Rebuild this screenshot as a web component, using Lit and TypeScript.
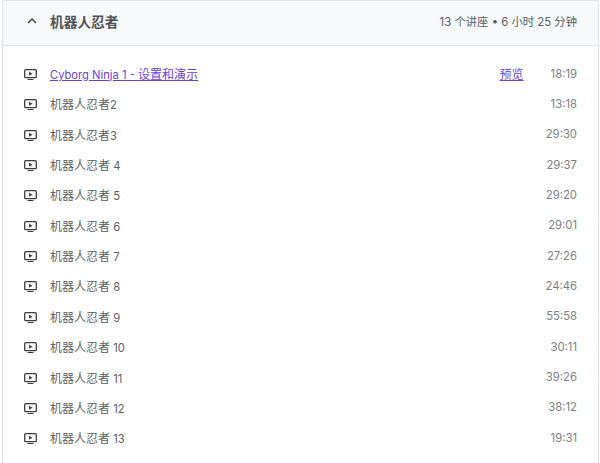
import { LitElement, html, css } from "lit";
import { customElement } from "lit/decorators.js";

const rows: [string, string, string][] = [
  ["机器人忍者", "2", "13:18"],
  ["机器人忍者", "3", "29:30"],
  ["机器人忍者", " 4", "29:37"],
  ["机器人忍者", " 5", "29:20"],
  ["机器人忍者", " 6", "29:01"],
  ["机器人忍者", " 7", "27:26"],
  ["机器人忍者", " 8", "24:46"],
  ["机器人忍者", " 9", "55:58"],
  ["机器人忍者", " 10", "30:11"],
  ["机器人忍者", " 11", "39:26"],
  ["机器人忍者", " 12", "38:12"],
  ["机器人忍者", " 13", "19:31"],
];

const icon = html`<svg class="icon" viewBox="0 0 13 11" width="13" height="11" aria-hidden="true">
  <rect x="0.7" y="0.7" width="11.6" height="8" rx="1" fill="none" stroke="#3a3c3e" stroke-width="1.3"></rect>
  <path d="M5 2.7v4L8.6 4.7z" fill="#3a3c3e"></path>
  <path d="M3.5 10.5h6" stroke="#3a3c3e" stroke-width="1"></path>
</svg>`;

@customElement("app-root")
export class AppRoot extends LitElement {
  static styles = css`
    :host {
      display: block;
      width: 600px;
      height: 463px;
      overflow: hidden;
      background: #fff;
      font-family: Inter, "Noto Sans CJK SC", sans-serif;
      color: #3e4143;
    }
    .panel {
      margin-left: 2px;
      width: 597px;
      height: 463px;
      box-sizing: border-box;
      border-left: 1px solid #dfe4e9;
      border-right: 1px solid #dfe4e9;
    }
    .head {
      box-sizing: border-box;
      height: 46px;
      display: flex;
      align-items: center;
      padding: 0 21px 4px 23px;
      background: #f7f9fa;
      border-top: 1px solid #dfe4e9;
      border-bottom: 1px solid #dfe4e9;
    }
    .chev {
      width: 12px;
      height: 8px;
      margin-right: 12px;
    }
    .title {
      font-size: 13.7px;
      font-weight: 700;
      color: #505356;
    }
    .summary {
      margin-left: auto;
      font-size: 11.35px;
      color: #5a5d60;
    }
    .list {
      padding: 12.4px 21px 0 21px;
      display: flex;
      flex-direction: column;
    }
    .row {
      height: 30.35px;
      display: flex;
      align-items: center;
      font-size: 11.2px;
    }
    .icon {
      flex: none;
      margin: 2px 13px 0 0;
    }
    .name {
      flex: 1;
      color: #5c5f62;
      white-space: pre;
    }
    .cn {
      font-size: 12px;
    }
    .name.link,
    .preview {
      color: #6a3fd6;
      text-decoration: underline;
    }
    .preview {
      margin-right: 27px;
    }
    .time {
      color: #7b8084;
      font-size: 11.3px;
    }
  `;

  render() {
    return html`<div class="panel">
      <div class="head">
        <svg class="chev" viewBox="0 0 12 8" aria-hidden="true">
          <path d="M2 6l4-4 4 4" fill="none" stroke="#3a3c3e" stroke-width="1.4"></path>
        </svg>
        <span class="title">机器人忍者</span>
        <span class="summary">13 个讲座 • 6 小时 25 分钟</span>
      </div>
      <div class="list">
        <div class="row">
          ${icon}
          <span class="name link">Cyborg Ninja 1 - <span class="cn">设置和演示</span></span>
          <span class="preview cn">预览</span>
          <span class="time">18:19</span>
        </div>
        ${rows.map(
          ([n, d, t]) => html`<div class="row">
            ${icon}<span class="name"><span class="cn">${n}</span>${d}</span><span class="time">${t}</span>
          </div>`
        )}
      </div>
    </div>`;
  }
}
